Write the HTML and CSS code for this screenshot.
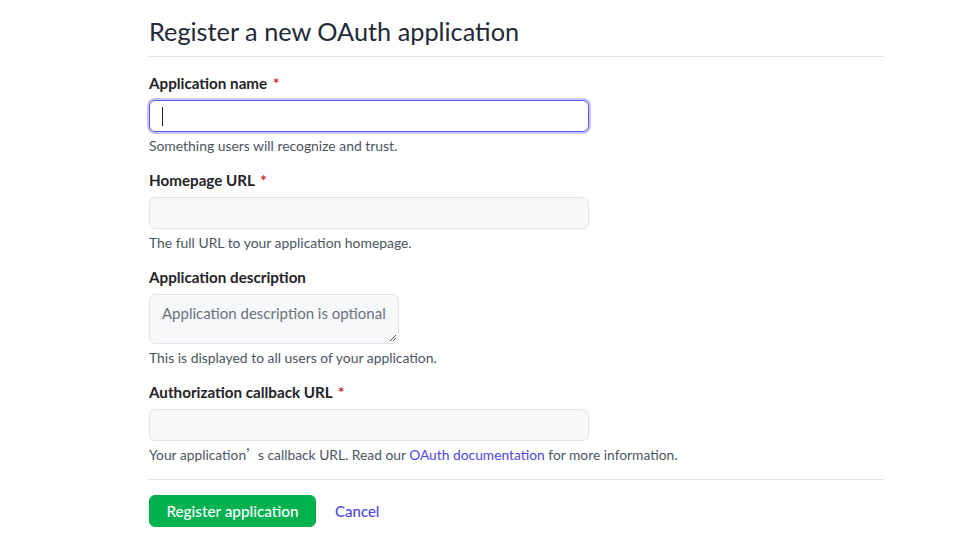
FILE: index.html
```html
<!DOCTYPE html>
<html>
<head>
<meta charset="utf-8">
<link rel="stylesheet" href="styles.css">
</head>
<body>
<main class="page">
  <h1 class="title">Register a new OAuth application</h1>
  <form class="form">
    <div class="group">
      <label class="label">Application name <span class="req">*</span></label>
      <div class="input input-focus"><span class="caret"></span></div>
      <p class="hint">Something users will recognize and trust.</p>
    </div>
    <div class="group">
      <label class="label">Homepage URL <span class="req">*</span></label>
      <div class="input"></div>
      <p class="hint">The full URL to your application homepage.</p>
    </div>
    <div class="group">
      <label class="label">Application description</label>
      <div class="textarea"><span class="placeholder">Application description is optional</span><svg class="grip" width="7" height="7" viewBox="0 0 7 7"><path d="M7 1L1 7M7 4L4 7" stroke="#555" stroke-width="1"/></svg></div>
      <p class="hint">This is displayed to all users of your application.</p>
    </div>
    <div class="group">
      <label class="label">Authorization callback URL <span class="req">*</span></label>
      <div class="input"></div>
      <p class="hint hint-last">Your application<span class="cjk">’</span>s callback URL. Read our <a class="link">OAuth documentation</a> for more information.</p>
    </div>
    <div class="actions">
      <button type="button" class="btn">Register application</button>
      <a class="cancel">Cancel</a>
    </div>
  </form>
</main>
</body>
</html>
```
FILE: styles.css
```css
* { box-sizing: border-box; }
body {
  margin: 0;
  background: #fff;
  font-family: Lato, "Noto Sans", sans-serif;
  color: #1f2328;
}
.page {
  width: 735px;
  margin-left: 149px;
  padding-top: 14px;
}
.title {
  margin: 0;
  font-size: 25.3px;
  font-weight: 400;
  line-height: 34px;
  padding-bottom: 8px;
  border-bottom: 1px solid #e1e1e8;
  color: #1f2937;
}
.form { padding-top: 16px; }
.group { margin-bottom: 15px; }
.label {
  display: block;
  font-size: 15.2px;
  font-weight: 700;
  line-height: 20px;
  margin-bottom: 7px;
  color: #1f2328;
}
.req { color: #cf222e; margin-left: 2px; }
.input {
  width: 440px;
  height: 32px;
  border: 1px solid #e3e5ea;
  border-radius: 6px;
  background: #f7f8fa;
}
.input-focus {
  background: #fff;
  border-color: #5b55e0;
  box-shadow: 0 0 0 2px #c8c6f6;
  display: flex;
  align-items: center;
  padding-left: 12px;
}
.caret {
  width: 1px;
  height: 19px;
  background: #1f2328;
}
.textarea {
  position: relative;
  width: 250px;
  height: 50px;
  border: 1px solid #e3e5ea;
  border-radius: 6px;
  background: #f7f8fa;
  padding: 8px 12px;
}
.placeholder {
  font-size: 15px;
  color: #6b7280;
  line-height: 20px;
}
.grip { position: absolute; right: 2px; bottom: 2px; }
.hint {
  margin: 5px 0 0;
  font-size: 13.9px;
  line-height: 18px;
  color: #4b5563;
}
.hint-last { font-size: 13.8px; height: 18px; }
.cjk { font-family: "Noto Sans CJK SC", sans-serif; line-height: 0; letter-spacing: -2px; }
.link { color: #4f46e5; }
.actions {
  border-top: 1px solid #e1e1e8;
  padding-top: 15px;
  display: flex;
  align-items: center;
  gap: 19px;
}
.btn {
  height: 32px;
  width: 167px;
  border: 1px solid #02a94b;
  border-radius: 6px;
  background: #00b14f;
  color: #fff;
  font-family: inherit;
  font-size: 15.3px;
  font-weight: 500;
}
.cancel {
  color: #4f46e5;
  font-size: 15px;
  font-weight: 500;
}
```
